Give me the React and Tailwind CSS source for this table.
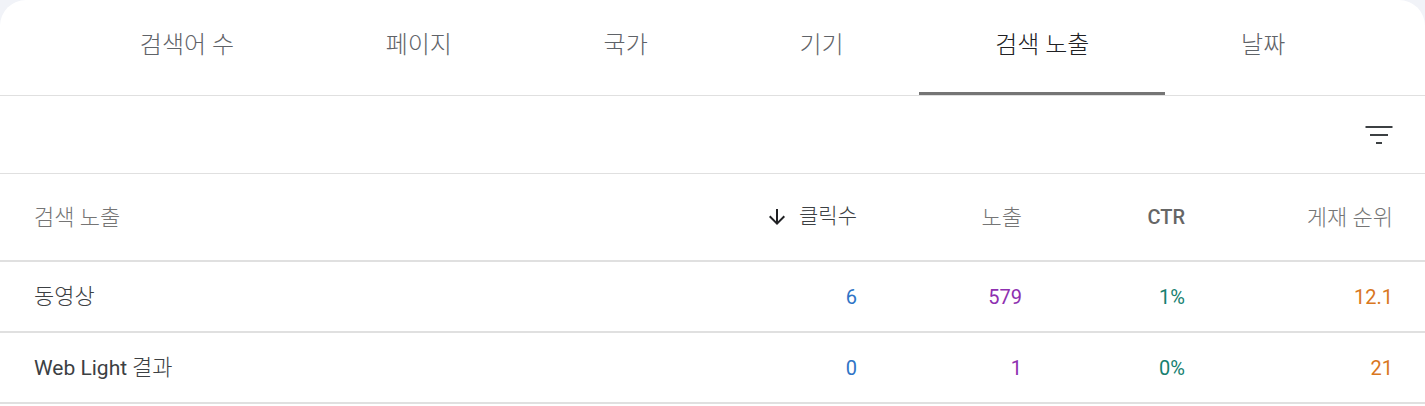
import React, { useState } from 'react';

const font = { fontFamily: 'Roboto, "Noto Sans CJK KR", sans-serif' };

const tabs = ['검색어 수', '페이지', '국가', '기기', '검색 노출', '날짜'];

const rows = [
  { name: '동영상', clicks: '6', impressions: '579', ctr: '1%', position: '12.1' },
  { name: 'Web Light', suffix: '결과', clicks: '0', impressions: '1', ctr: '0%', position: '21' },
];

// Korean glyphs render a touch wider in the original, so bump them up
const Ko = ({ children, className = 'text-[22px]' }) => (
  <span className={'font-light ' + className}>{children}</span>
);

const FilterIcon = () => (
  <svg width="36" height="36" viewBox="0 0 24 24" fill="#3c4043">
    <path d="M10 18h4v-1.3h-4V18zM3 6v1.3h18V6H3zm3 6.65h12v-1.3H6v1.3z" />
  </svg>
);

const ArrowDown = () => (
  <svg width="24" height="24" viewBox="0 0 24 24" fill="#202124">
    <path d="M20 12l-1.41-1.41L13 16.17V4h-2v12.17l-5.58-5.59L4 12l8 8 8-8z" />
  </svg>
);

export default function App() {
  const [active, setActive] = useState(4);

  return (
    <div className="bg-[#f1f3f8] w-full h-[406px] overflow-hidden" style={font}>
      <div className="bg-white rounded-t-[26px] h-full">
        {/* Tabs */}
        <div className="flex h-[96px] px-16 border-b border-[#e0e0e0]">
          {tabs.map((t, i) => (
            <button
              key={t}
              onClick={() => setActive(i)}
              className={
                'grow flex items-center justify-center pb-[3px] text-[24px] font-light border-b-[3px] ' +
                (active === i
                  ? 'text-[#202124] border-[#757575]'
                  : 'text-[#5f6368] border-transparent')
              }
            >
              {t}
            </button>
          ))}
        </div>

        {/* Toolbar */}
        <div className="flex items-center justify-end h-[78px] pr-[28px] border-b border-[#e0e0e0]">
          <FilterIcon />
        </div>

        {/* Table */}
        <div className="grid grid-cols-[1fr_160px_165px_163px_208px] h-[88px] items-center pl-[34px] pr-[32px] border-b-2 border-[#e0e0e0] text-[20px] text-[#757575]">
          <div><Ko>검색 노출</Ko></div>
          <div className="flex items-center justify-end gap-[10px] text-[#3c4043]">
            <ArrowDown />
            <Ko className="text-[21px]">클릭수</Ko>
          </div>
          <div className="text-right"><Ko>노출</Ko></div>
          <div className="text-right font-medium text-[#666]">CTR</div>
          <div className="text-right"><Ko>게재 순위</Ko></div>
        </div>

        {rows.map((r) => (
          <div
            key={r.name}
            className="grid grid-cols-[1fr_160px_165px_163px_208px] h-[71px] items-center pl-[34px] pr-[32px] border-b-2 border-[#e0e0e0] text-[20px]"
          >
            <div className="text-[#3c4043]">
              {r.suffix ? (
                <>
                  <span className="text-[21px]">{r.name}</span> <Ko>{r.suffix}</Ko>
                </>
              ) : (
                <Ko>{r.name}</Ko>
              )}
            </div>
            <div className="text-right text-[#2f74c6]">{r.clicks}</div>
            <div className="text-right text-[#8e30b0]">{r.impressions}</div>
            <div className="text-right text-[#16806f]">{r.ctr}</div>
            <div className="text-right text-[#d9771e]">{r.position}</div>
          </div>
        ))}
      </div>
    </div>
  );
}
